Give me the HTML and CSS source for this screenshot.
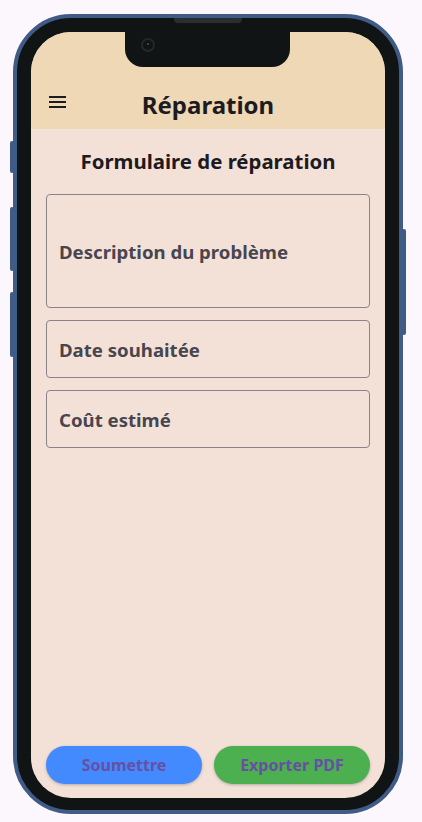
FILE: index.html
```html
<!DOCTYPE html>
<html lang="fr">
<head>
<meta charset="utf-8">
<title>Réparation</title>
<link rel="stylesheet" href="styles.css">
</head>
<body>
<div class="phone">
  <span class="side-btn left b1"></span>
  <span class="side-btn left b2"></span>
  <span class="side-btn left b3"></span>
  <span class="side-btn right b4"></span>
  <div class="bezel">
    <span class="speaker"></span>
    <div class="screen">
      <div class="notch"><span class="camera"></span></div>
      <header class="appbar">
        <div class="toolbar">
          <button class="menu" aria-label="Menu">
            <svg width="18" height="12" viewBox="0 0 18 12"><path d="M0 1h17M0 6h17M0 11h17" stroke="#1d1b20" stroke-width="2"/></svg>
          </button>
          <h1 class="title">Réparation</h1>
        </div>
      </header>
      <main class="content">
        <h2 class="form-title">Formulaire de réparation</h2>
        <div class="field tall"><span class="label">Description du problème</span></div>
        <div class="field"><span class="label">Date souhaitée</span></div>
        <div class="field"><span class="label">Coût estimé</span></div>
        <div class="spacer"></div>
        <div class="actions">
          <button class="btn submit">Soumettre</button>
          <button class="btn export">Exporter PDF</button>
        </div>
      </main>
    </div>
  </div>
</div>
</body>
</html>
```
FILE: styles.css
```css
* { box-sizing: border-box; }
html, body { margin: 0; padding: 0; }
body {
  background: #fcf6fd;
  width: 422px;
  height: 822px;
  font-family: "Noto Sans", "Open Sans", sans-serif;
  padding: 14px 0 0 13px;
}
.phone {
  position: relative;
  width: 390px;
  height: 800px;
  border: 4px solid #3f5b86;
  border-radius: 58px;
  background: #111414;
}
.side-btn {
  position: absolute;
  width: 4px;
  background: #3f5b86;
  border-radius: 2px;
}
.side-btn.left { left: -7px; }
.side-btn.right { right: -7px; }
.b1 { top: 123px; height: 32px; }
.b2 { top: 189px; height: 64px; }
.b3 { top: 274px; height: 65px; }
.b4 { top: 211px; height: 106px; }
.bezel {
  position: relative;
  width: 100%;
  height: 100%;
  padding: 14px 14px 12px 14px;
}
.speaker {
  position: absolute;
  top: 0;
  left: 157px;
  width: 68px;
  height: 5px;
  background: #2a2e31;
  border-radius: 0 0 4px 4px;
}
.screen {
  position: relative;
  height: 100%;
  border-radius: 40px;
  overflow: hidden;
  background: #f3e1d8;
  display: flex;
  flex-direction: column;
}
.notch {
  position: absolute;
  top: 0;
  left: 94px;
  width: 165px;
  height: 35px;
  background: #111414;
  border-radius: 0 0 18px 18px;
  z-index: 2;
}
.camera {
  position: absolute;
  left: 16px;
  top: 6px;
  width: 14px;
  height: 14px;
  border-radius: 50%;
  border: 2px solid #22282b;
  background: #111414;
}
.camera::after {
  content: "";
  position: absolute;
  left: 4px;
  top: 3px;
  width: 2px;
  height: 2px;
  border-radius: 50%;
  background: #4a5358;
}
.appbar {
  background: #eed8b5;
  height: 97px;
  padding-top: 48px;
  flex: none;
}
.toolbar {
  position: relative;
  height: 49px;
  display: flex;
  align-items: center;
  justify-content: center;
}
.menu {
  position: absolute;
  left: 18px;
  top: 16px;
  border: 0;
  padding: 0;
  background: none;
  width: 18px;
  height: 12px;
  display: block;
}
.menu svg { display: block; }
.title {
  margin: 0;
  font-size: 24px;
  font-weight: 700;
  color: #1d1b20;
  line-height: 1;
}
.content {
  flex: 1;
  display: flex;
  flex-direction: column;
  padding: 16px 15px 14px 15px;
}
.form-title {
  margin: 0 0 17px;
  text-align: center;
  font-size: 20.4px;
  font-weight: 700;
  color: #1d1b20;
  line-height: 32px;
}
.field {
  height: 58px;
  border: 1px solid #8a8289;
  border-radius: 4px;
  display: flex;
  align-items: center;
  padding: 0 12px;
  margin-bottom: 12px;
}
.field.tall { height: 114px; }
.label {
  font-size: 18.6px;
  font-weight: 700;
  color: #49454f;
}
.spacer { flex: 1; }
.actions {
  display: flex;
  gap: 12px;
}
.btn {
  flex: 1;
  height: 38px;
  border: 0;
  border-radius: 19px;
  font-family: inherit;
  font-size: 16px;
  font-weight: 700;
  color: #6750a4;
  box-shadow: 0 1px 3px rgba(0,0,0,0.25);
}
.submit { background: #448aff; }
.export { background: #4caf50; }
```
